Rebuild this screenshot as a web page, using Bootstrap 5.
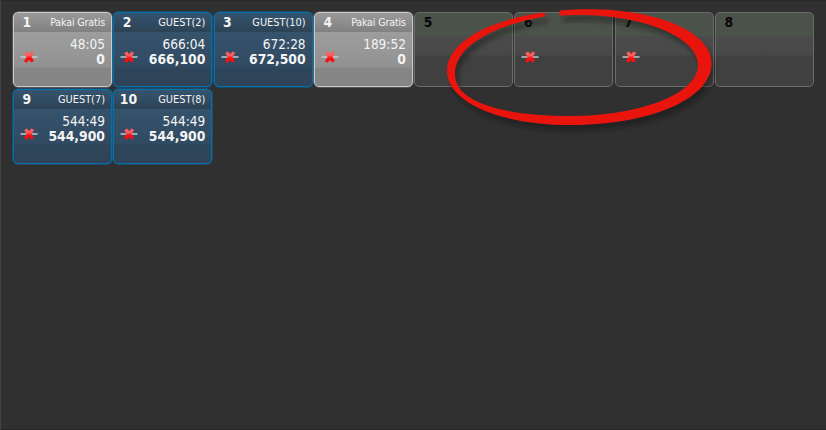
<!DOCTYPE html>
<html lang="id">
<head>
<meta charset="utf-8">
<meta name="viewport" content="width=device-width, initial-scale=1">
<title>Stations</title>
<link href="https://cdn.jsdelivr.net/npm/bootstrap@5.3.0/dist/css/bootstrap.min.css" rel="stylesheet">
<style>
body{background:#303030;font-family:"DejaVu Sans Condensed","DejaVu Sans",sans-serif;font-stretch:condensed;color:#f4f4f4}
.board{height:430px;border-left:1px solid #424242;border-bottom:1px solid #282528;padding:12px 11px 0 12px;box-shadow:inset 0 1px #292929}
.stations{display:grid;grid-template-columns:repeat(8,99px);column-gap:1.3px;row-gap:2px}
.station{height:75px;border:1px solid #0070ae;border-radius:5px;box-shadow:0 0 0 .6px #13618f;background:linear-gradient(#355570 0,#2d4356 19.5px,#36536c 20px,#304a61 55px,#2e455a 56px,#2e4357 100%) border-box}
.station.free{border-color:#cacaca;box-shadow:0 0 0 .5px #777;background:linear-gradient(#9b9b9b 0,#818181 19.5px,#9d9d9d 20px,#929292 55px,#868686 56px,#858585 100%) border-box}
.station.idle{border-color:#6c6c6c;box-shadow:none;background:linear-gradient(#4b5249 0,#4b5249 23.5px,#4b4b4b 24px,#484848 43px,#404040 44px,#404040 100%) border-box}
.head{height:19px;padding:0 6px 0 8.5px}
.num{font:bold 13.8px/19px "DejaVu Sans Condensed","DejaVu Sans",sans-serif;min-width:9px}
.wide{margin-left:-3px}
.idle .num{color:#080808}
.who{font-size:10.9px;line-height:19px}
.free .who{font-size:10.5px;letter-spacing:-.1px}
.info{padding:5px 6px 0 5px;line-height:15px;font-size:13.5px}
.total{font-weight:bold;font-size:13.8px}
.plug{width:20px;height:14px;margin-top:13px;flex:none}
.ring{left:440px;top:0;width:282px;height:140px;pointer-events:none}
</style>
<script src="https://cdn.jsdelivr.net/npm/bootstrap@5.3.0/dist/js/bootstrap.bundle.min.js"></script>
</head>
<body class="overflow-hidden">
<svg class="position-absolute" width="0" height="0"><defs>
<linearGradient id="red" x2="0" y2="1"><stop offset=".35" stop-color="#ff5c5c"/><stop offset=".6" stop-color="#f80f0f"/></linearGradient>
<symbol id="off" viewBox="0 0 20 14"><path d="M1.500 7h17" stroke="#c4c8ca" stroke-width="1.5"/><path d="M5.200 3 8.200 1.400 10.200 4.300 12.200 1.400 15.200 2.700 12.600 7 15 11 12.200 12.600 10 9.900 7.700 12.700 4.900 11.200 7.600 7z" fill="url(#red)"/></symbol>
</defs></svg>
<main class="board position-relative">
<div class="stations">
<section class="station free"><div class="head d-flex justify-content-between"><span class="num">1</span><span class="who">Pakai Gratis</span></div><div class="info d-flex justify-content-between"><svg class="plug"><use href="#off"/></svg><div class="text-end"><div>48:05</div><div class="total">0</div></div></div></section>
<section class="station"><div class="head d-flex justify-content-between"><span class="num">2</span><span class="who">GUEST(2)</span></div><div class="info d-flex justify-content-between"><svg class="plug"><use href="#off"/></svg><div class="text-end"><div>666:04</div><div class="total">666,100</div></div></div></section>
<section class="station"><div class="head d-flex justify-content-between"><span class="num">3</span><span class="who">GUEST(10)</span></div><div class="info d-flex justify-content-between"><svg class="plug"><use href="#off"/></svg><div class="text-end"><div>672:28</div><div class="total">672,500</div></div></div></section>
<section class="station free"><div class="head d-flex justify-content-between"><span class="num">4</span><span class="who">Pakai Gratis</span></div><div class="info d-flex justify-content-between"><svg class="plug"><use href="#off"/></svg><div class="text-end"><div>189:52</div><div class="total">0</div></div></div></section>
<section class="station idle"><div class="head d-flex"><span class="num">5</span></div></section>
<section class="station idle"><div class="head d-flex"><span class="num">6</span></div><div class="info d-flex"><svg class="plug"><use href="#off"/></svg></div></section>
<section class="station idle"><div class="head d-flex"><span class="num">7</span></div><div class="info d-flex"><svg class="plug"><use href="#off"/></svg></div></section>
<section class="station idle"><div class="head d-flex"><span class="num">8</span></div></section>
<section class="station"><div class="head d-flex justify-content-between"><span class="num">9</span><span class="who">GUEST(7)</span></div><div class="info d-flex justify-content-between"><svg class="plug"><use href="#off"/></svg><div class="text-end"><div>544:49</div><div class="total">544,900</div></div></div></section>
<section class="station"><div class="head d-flex justify-content-between"><span class="num wide">10</span><span class="who">GUEST(8)</span></div><div class="info d-flex justify-content-between"><svg class="plug"><use href="#off"/></svg><div class="text-end"><div>544:49</div><div class="total">544,900</div></div></div></section>
</div>
</main>
<svg class="ring position-absolute" viewBox="440 0 282 140">
<defs><filter id="soft" x="-10%" y="-10%" width="120%" height="130%"><feGaussianBlur stdDeviation="2"/></filter>
<path id="loop" d="M545 12.500C492 19 447 41 447 71C447 102 500 125 570 125C650 125 711.700 99 711.700 63C711.700 29 645 3 559.500 10.500L559.500 15.500C635 11 698 35 698 65C698 94 640 116 570 116C505 116 455 103 455 74C455 46 494 25 545 16.500Z"/></defs>
<use href="#loop" transform="translate(3 6)" fill="#111" opacity=".38" filter="url(#soft)"/>
<use href="#loop" fill="#e9150d"/>
</svg>
</body>
</html>
